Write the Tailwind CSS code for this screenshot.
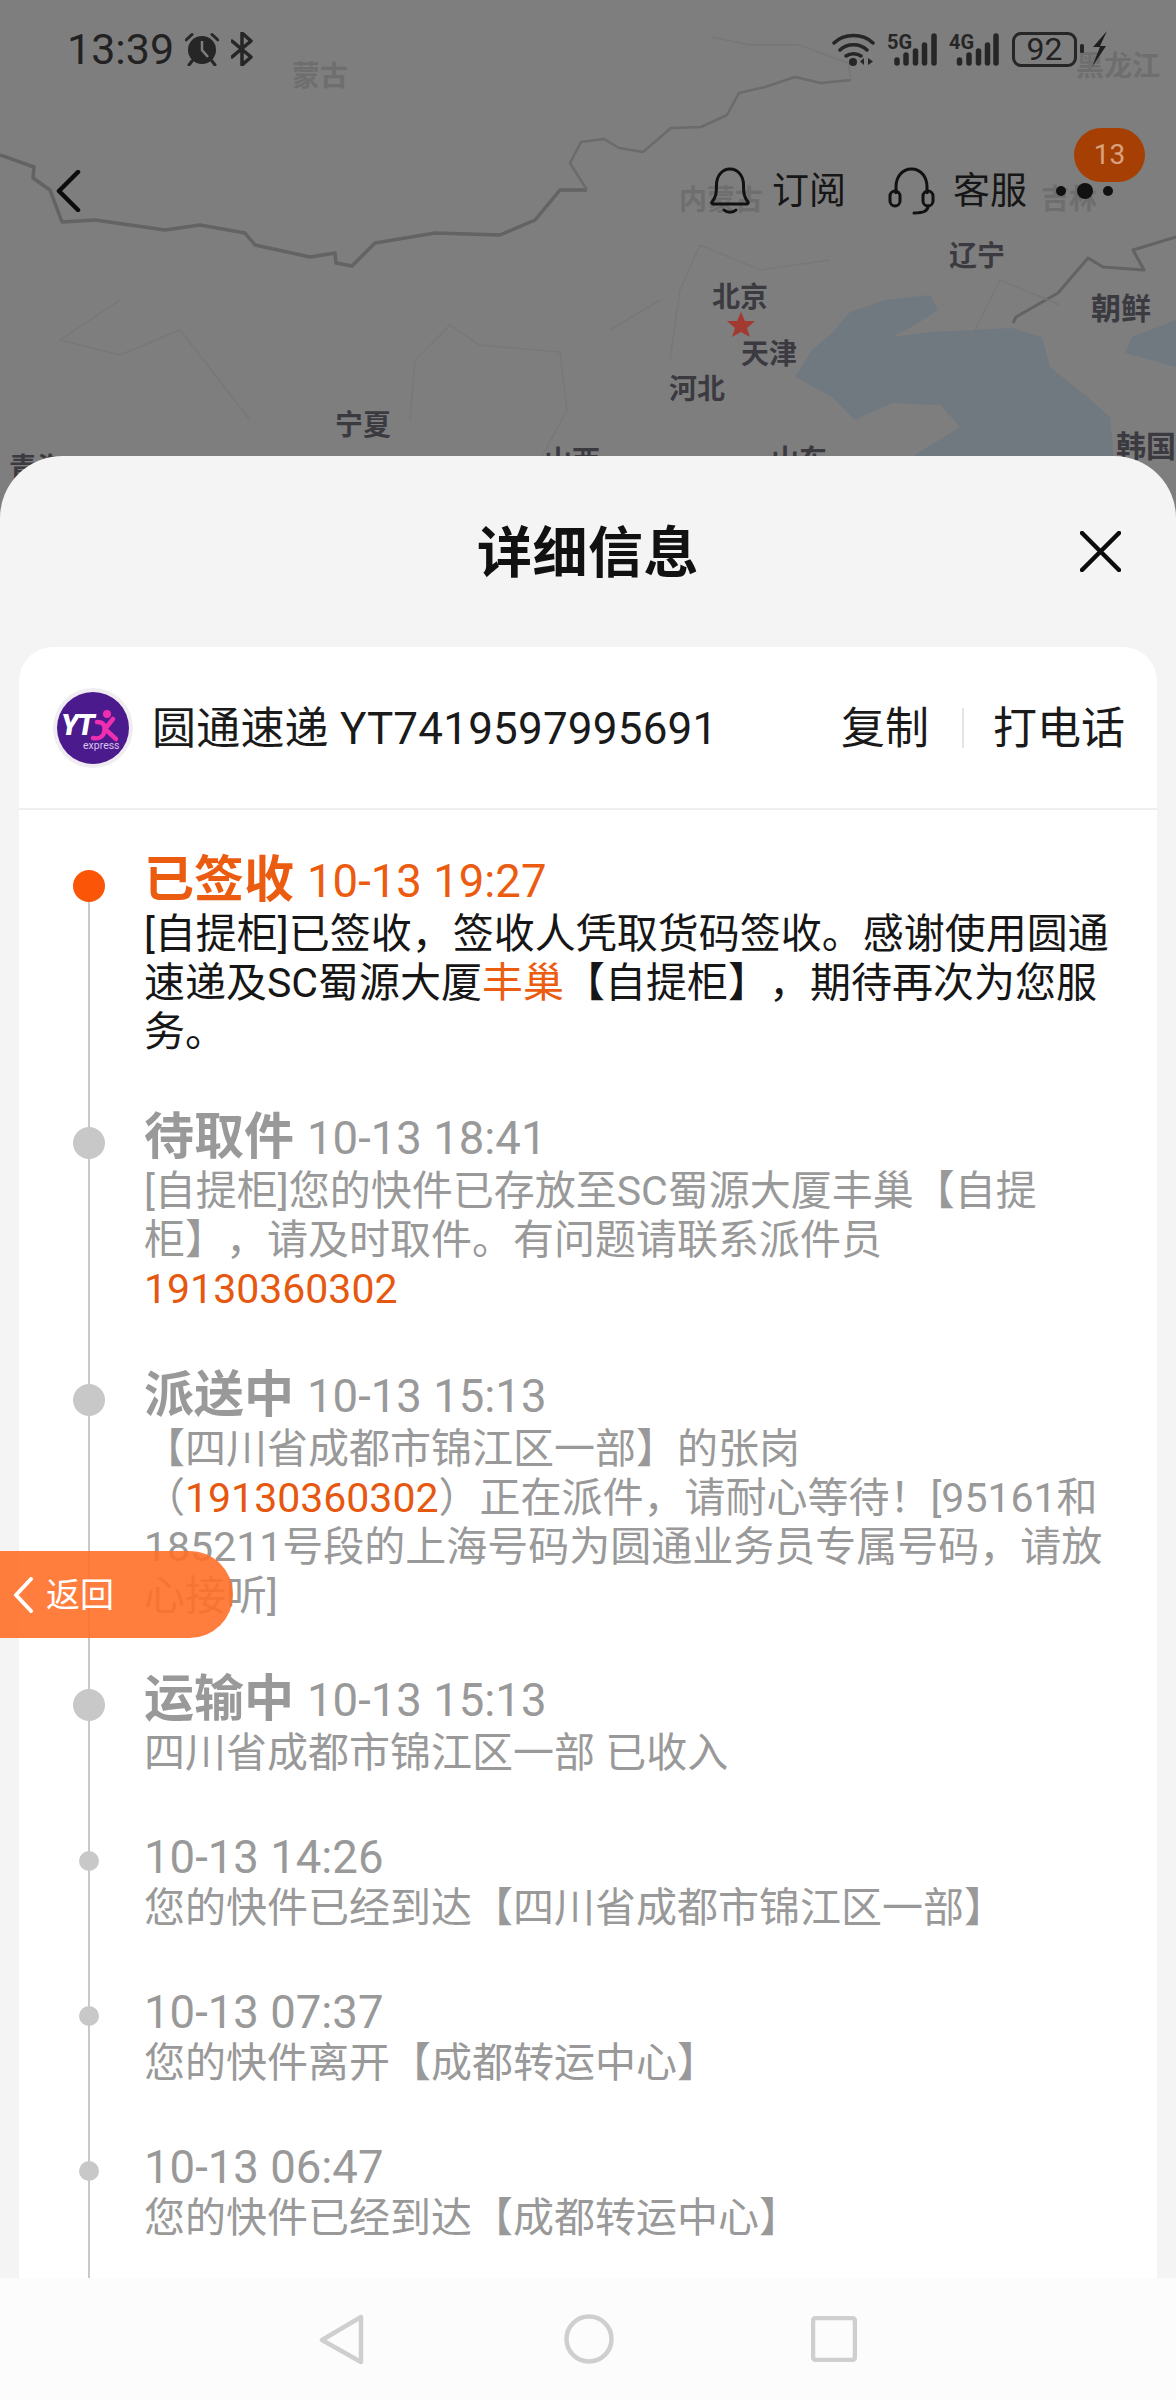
<!DOCTYPE html>
<html lang="zh">
<head>
<meta charset="utf-8">
<script src="https://cdn.jsdelivr.net/npm/@tailwindcss/browser@4"></script>
</head>
<body>
<div class="relative w-[1176px] h-[2400px] overflow-hidden bg-[#7e7e7e] font-['Roboto','Noto_Sans_CJK_SC',sans-serif]">

  <!-- map -->
  <div class="absolute left-0 top-0 w-[1176px] h-[540px] text-[28px] leading-[28px] font-bold text-[#3a3a40]">
    <svg class="absolute inset-0" width="1176" height="540" viewBox="0 0 1176 540" fill="none">
      <path d="M795 377L812 350L832 333L850 312L885 300L930 295L938 310L915 325L892 337L930 332L975 330L1012 328L1042 337L1050 367L1085 395L1110 417L1115 470L900 470L915 455L960 427L940 405L892 403L855 420L832 397Z" fill="#717980"/>
      <path d="M1176 320L1132 337L1125 353L1176 367Z" fill="#717980"/>
      <path d="M0 155L34 167L33 178L50 190L62 222L95 220L165 230L200 225L245 233L255 245L310 257L335 253L336 263L352 266L375 243L435 233L500 235L535 220L560 190L587 190" stroke="#636363" stroke-width="3.500" stroke-linejoin="round"/>
      <path d="M587 190L570 163L581 142L604 139L619 148L643 152L671 128L701 127L727 115L739 93L765 87L795 77L821 83L851 80" stroke="#6b6b6b" stroke-width="2.500" stroke-linejoin="round"/>
      <path d="M851 80L848 63L800 45L750 45L712 37" stroke="#777777" stroke-width="1.500"/>
      <path d="M1176 237L1133 250L1144 270L1103 267L1088 258L1058 293L1016 317L1013 323" stroke="#636363" stroke-width="3" stroke-linejoin="round"/>
      <path d="M410 420L415 360L450 325L480 345L560 352L567 410L540 460M670 360L680 290L700 245L760 270L830 260M120 300L60 340L120 355L180 330L250 420M660 300L610 330M970 340L1000 280L1060 305" stroke="#787878" stroke-width="1.500"/>
      <path d="M741 312L745 321L755 321L747 328L750 337L741 332L732 337L735 328L727 321L737 321Z" fill="#a33a32"/>
    </svg>
    <span class="absolute left-[292px] top-[63px] text-[#6e6e6e]">蒙古</span>
    <span class="absolute left-[1076px] top-[53px] text-[#6e6e6e]">黑龙江</span>
    <span class="absolute left-[679px] top-[187px] text-[#6e6e6e]">内蒙古</span>
    <span class="absolute left-[1041px] top-[186px] text-[#6e6e6e]">吉林</span>
    <span class="absolute left-[949px] top-[243px]">辽宁</span>
    <span class="absolute left-[712px] top-[284px]">北京</span>
    <span class="absolute left-[741px] top-[341px]">天津</span>
    <span class="absolute left-[669px] top-[376px]">河北</span>
    <span class="absolute left-[335px] top-[412px]">宁夏</span>
    <span class="absolute left-[1091px] top-[294px] text-[30px] leading-[30px]">朝鲜</span>
    <span class="absolute left-[1116px] top-[432px] text-[30px] leading-[30px]">韩国</span>
    <span class="absolute left-[9px] top-[455px]">青海</span>
    <span class="absolute left-[544px] top-[448px]">山西</span>
    <span class="absolute left-[771px] top-[447px]">山东</span>
  </div>

  <div class="relative flex flex-col h-[2400px]">
    <!-- top area -->
    <div class="h-[456px] shrink-0">
      <!-- status bar -->
      <div class="flex items-center h-[34px] mt-[32px] pl-[67px] pr-[69px] text-[#222222]">
        <span class="text-[43px] leading-[34px]">13:39</span>
        <svg class="ml-[11px]" width="34" height="34" viewBox="0 0 34 34" fill="none">
          <circle cx="17" cy="18" r="14" fill="#262626"/>
          <path d="M17 9V18L23 25" stroke="#7e7e7e" stroke-width="2.500"/>
          <path d="M1 8L7 2.500M33 8L27 2.500M7 29L4 33M27 29L30 33" stroke="#262626" stroke-width="3" stroke-linecap="round"/>
        </svg>
        <svg class="ml-[12px]" width="23" height="34" viewBox="0 0 23 34" fill="none">
          <path d="M1 9L20 25L11 33V1L20 9L1 25" stroke="#262626" stroke-width="3.500" stroke-linejoin="round" stroke-linecap="round"/>
        </svg>
        <div class="ml-auto flex items-center">
          <svg width="43" height="34" viewBox="0 0 43 34" fill="none">
            <path d="M2 11C12 1 31 1 41 11M8 18C15 11 28 11 35 18M14 24C18 21 25 21 29 24" stroke="#262626" stroke-width="3.500" stroke-linecap="round"/>
            <circle cx="21" cy="30" r="4" fill="#262626"/>
            <path d="M32 26V33L28 29.500ZM36 26V33L41 29.500Z" fill="#262626"/>
          </svg>
          <svg class="ml-[12px]" width="50" height="38" viewBox="0 0 50 38">
            <text x="0" y="19" font-size="20" font-weight="700" fill="#262626" font-family="Roboto">5G</text>
            <path d="M10 30V33M19 25V33M28.500 21V33M37.500 15V33M47 6V33" stroke="#262626" stroke-width="5.500" stroke-linecap="round"/>
          </svg>
          <svg class="ml-[12px]" width="50" height="38" viewBox="0 0 50 38">
            <text x="0" y="19" font-size="20" font-weight="700" fill="#262626" font-family="Roboto">4G</text>
            <path d="M10.500 30V33M20 25V33M29.500 21V33M38.500 15V33M47 6V33" stroke="#262626" stroke-width="5.500" stroke-linecap="round"/>
          </svg>
          <div class="ml-[13px] w-[65px] h-[35px] rounded-[9px] border-[3px] border-[#262626] flex items-center justify-center text-[32px] leading-none">92</div>
          <svg class="ml-[3px]" width="27" height="36" viewBox="0 0 27 36">
            <rect x="0" y="13" width="4" height="9" rx="1.500" fill="#262626"/>
            <path d="M27 0L13 16H20L12 36L26 15H20Z" fill="#1f1f1f"/>
          </svg>
        </div>
      </div>
      <!-- toolbar -->
      <div class="flex items-center h-[60px] mt-[95px] pl-[54px] pr-[63px] text-[37px] leading-none text-[#161616]">
        <svg width="27" height="42" viewBox="0 0 27 42" fill="none"><path d="M24 2L5 21L24 40" stroke="#0c0c0c" stroke-width="4.500" stroke-linecap="round" stroke-linejoin="round"/></svg>
        <div class="ml-auto flex items-center">
          <svg width="40" height="48" viewBox="0 0 40 48" fill="none">
            <path d="M2 35C6 30 6.500 26 6.500 18C6.500 9 12 2 20 2C28 2 33.500 9 33.500 18C33.500 26 34 30 38 35C38.500 36 38 37 37 37H3C2 37 1.500 36 2 35Z" stroke="#111111" stroke-width="3"/>
            <path d="M14 43C17 46 23 46 26 43" stroke="#111111" stroke-width="3" stroke-linecap="round"/>
          </svg>
          <span class="ml-[22px]">订阅</span>
          <svg class="ml-[42px]" width="47" height="48" viewBox="0 0 47 48" fill="none">
            <path d="M8 27V20C8 10 14 2 23.500 2C33 2 39 10 39 20V27" stroke="#111111" stroke-width="3"/>
            <rect x="2" y="24" width="10" height="15" rx="5" stroke="#111111" stroke-width="3"/>
            <rect x="35" y="24" width="10" height="15" rx="5" stroke="#111111" stroke-width="3"/>
            <path d="M40 39C40 44 36 46 26 46" stroke="#111111" stroke-width="3" stroke-linecap="round"/>
          </svg>
          <span class="ml-[18px]">客服</span>
          <svg class="ml-[29px]" width="57" height="20" viewBox="0 0 57 20">
            <circle cx="5" cy="10" r="5" fill="#111111"/><circle cx="29" cy="10" r="8" fill="#111111"/><circle cx="52" cy="10" r="5" fill="#111111"/>
          </svg>
        </div>
      </div>
    </div>

    <!-- sheet -->
    <div class="flex-1 flex flex-col min-h-0 bg-[#f4f4f4] rounded-t-[62px]">
      <div class="relative h-[191px] shrink-0 flex items-center justify-center pt-[4px]">
        <h1 class="text-[55px] leading-none font-bold tracking-[0.5px] text-[#111111]">详细信息</h1>
        <svg class="absolute left-[1080px] top-[75px]" width="41" height="41" viewBox="0 0 41 41" fill="none"><path d="M2 2L39 39M39 2L2 39" stroke="#0c0c0c" stroke-width="4.500" stroke-linecap="round"/></svg>
      </div>
      <div class="relative flex-1 min-h-0 mx-[19px] bg-white rounded-t-[34px] overflow-hidden">
        <!-- header -->
        <div class="h-[163px] flex items-center border-b-2 border-[#efefef] pl-[34px] pr-[32px] text-[44px] leading-none text-[#1a1a1a]">
          <svg width="80" height="80" viewBox="0 0 80 80">
            <circle cx="40" cy="40" r="40" fill="#efedf2"/>
            <circle cx="40" cy="40" r="36" fill="#4b1a8c"/>
            <text x="8" y="47" font-size="29" font-weight="900" font-style="italic" fill="#ffffff" font-family="Roboto" letter-spacing="-2">YT</text>
            <circle cx="54" cy="26" r="4" fill="#f02fb0"/>
            <path d="M44 34C51 34 53 38 51 45C49 50 44 51 40 50M60 31L52 41L63 51" fill="none" stroke="#f02fb0" stroke-width="4.500" stroke-linecap="round"/>
            <text x="30" y="61" font-size="10.500" fill="#d8c4ee" font-family="Roboto">express</text>
          </svg>
          <span class="ml-[19px] pt-[3px] tracking-[0.2px]">圆通速递 YT7419597995691</span>
          <span class="ml-auto pt-[3px]">复制</span>
          <span class="ml-[33px] mr-[29px] w-[2px] h-[40px] bg-[#e4e4e4]"></span>
          <span class="pt-[3px]">打电话</span>
        </div>

        <!-- timeline -->
        <div class="relative pt-[43px] text-[41px] leading-[49px] text-[#999999] [text-spacing-trim:space-all]">
          <div class="absolute left-[69px] top-[60px] w-[2px] h-[1500px] bg-[#c9c9c9]"></div>

          <div class="relative pl-[125px] pb-[53px]">
            <span class="absolute left-[54px] top-[17px] w-[32px] h-[32px] rounded-full bg-[#fb5607]"></span>
            <div class="flex items-baseline gap-[13px] h-[55px] leading-[55px] text-[#ec5c10]"><b class="text-[50px] font-bold">已签收</b><span class="text-[45.500px]">10-13 19:27</span></div>
            <p class="mt-[2px] text-[#161616] whitespace-nowrap">[自提柜]已签收，签收人凭取货码签收。感谢使用圆通<br>速递及SC蜀源大厦<span class="text-[#ec5c10]">丰巢</span>【自提柜】，期待再次为您服<br>务。</p>
          </div>

          <div class="relative pl-[125px] pb-[54px]">
            <span class="absolute left-[54px] top-[17px] w-[32px] h-[32px] rounded-full bg-[#c8c8c8]"></span>
            <div class="flex items-baseline gap-[13px] h-[55px] leading-[55px]"><b class="text-[50px] font-bold">待取件</b><span class="text-[45.500px]">10-13 18:41</span></div>
            <p class="mt-[2px] whitespace-nowrap">[自提柜]您的快件已存放至SC蜀源大厦丰巢【自提<br>柜】，请及时取件。有问题请联系派件员<br><span class="text-[#e6580f]">19130360302</span></p>
          </div>

          <div class="relative pl-[125px] pb-[51px]">
            <span class="absolute left-[54px] top-[16px] w-[32px] h-[32px] rounded-full bg-[#c8c8c8]"></span>
            <div class="flex items-baseline gap-[13px] h-[55px] leading-[55px]"><b class="text-[50px] font-bold">派送中</b><span class="text-[45.500px]">10-13 15:13</span></div>
            <p class="mt-[2px] whitespace-nowrap">【四川省成都市锦江区一部】的张岗<br>（<span class="text-[#e6580f]">19130360302</span>）正在派件，请耐心等待！[95161和<br>185211号段的上海号码为圆通业务员专属号码，请放<br>心接听]</p>
          </div>

          <div class="relative pl-[125px] pb-[55px]">
            <span class="absolute left-[54px] top-[17px] w-[32px] h-[32px] rounded-full bg-[#c8c8c8]"></span>
            <div class="flex items-baseline gap-[13px] h-[55px] leading-[55px]"><b class="text-[50px] font-bold">运输中</b><span class="text-[45.500px]">10-13 15:13</span></div>
            <p class="mt-[2px] whitespace-nowrap">四川省成都市锦江区一部 已收入</p>
          </div>

          <div class="relative pl-[125px] pb-[55px]">
            <span class="absolute left-[60px] top-[18px] w-[20px] h-[20px] rounded-full bg-[#c8c8c8]"></span>
            <div class="text-[45.500px]">10-13 14:26</div>
            <p class="mt-[2px] whitespace-nowrap">您的快件已经到达【四川省成都市锦江区一部】</p>
          </div>

          <div class="relative pl-[125px] pb-[55px]">
            <span class="absolute left-[60px] top-[18px] w-[20px] h-[20px] rounded-full bg-[#c8c8c8]"></span>
            <div class="text-[45.500px]">10-13 07:37</div>
            <p class="mt-[2px] whitespace-nowrap">您的快件离开【成都转运中心】</p>
          </div>

          <div class="relative pl-[125px] pb-[55px]">
            <span class="absolute left-[60px] top-[18px] w-[20px] h-[20px] rounded-full bg-[#c8c8c8]"></span>
            <div class="text-[45.500px]">10-13 06:47</div>
            <p class="mt-[2px] whitespace-nowrap">您的快件已经到达【成都转运中心】</p>
          </div>
        </div>
      </div>
    </div>

    <!-- nav bar -->
    <div class="h-[122px] shrink-0 bg-[#fcfcfc] flex items-center justify-center gap-[100px]">
      <svg class="mr-[100px]" width="45" height="51" viewBox="0 0 45 51" fill="none"><path d="M42 3V48L3 26Z" stroke="#cfcfcf" stroke-width="4.500" stroke-linejoin="round"/></svg>
      <svg width="50" height="50" viewBox="0 0 50 50" fill="none"><circle cx="25" cy="25" r="22.500" stroke="#cfcfcf" stroke-width="4.500"/></svg>
      <svg class="ml-[97px]" width="46" height="46" viewBox="0 0 46 46" fill="none"><rect x="2" y="2" width="42" height="42" rx="3" stroke="#cfcfcf" stroke-width="4.500"/></svg>
    </div>
  </div>

  <!-- notification badge -->
  <div class="absolute left-[1074px] top-[128px] w-[71px] h-[54px] rounded-full bg-[#a63f03] text-[#d9a27e] text-[28px] flex items-center justify-center">13</div>

  <!-- floating back button -->
  <div class="absolute left-0 top-[1551px] w-[233px] h-[87px] rounded-r-[44px] bg-[#ff6f28]/90 flex items-center text-white text-[34px] leading-none pl-[13px]">
    <svg width="20" height="36" viewBox="0 0 20 36" fill="none"><path d="M18 2L3 18L18 34" stroke="#ffffff" stroke-width="4" stroke-linecap="round" stroke-linejoin="round"/></svg>
    <span class="ml-[13px]">返回</span>
  </div>
</div>
</body>
</html>
